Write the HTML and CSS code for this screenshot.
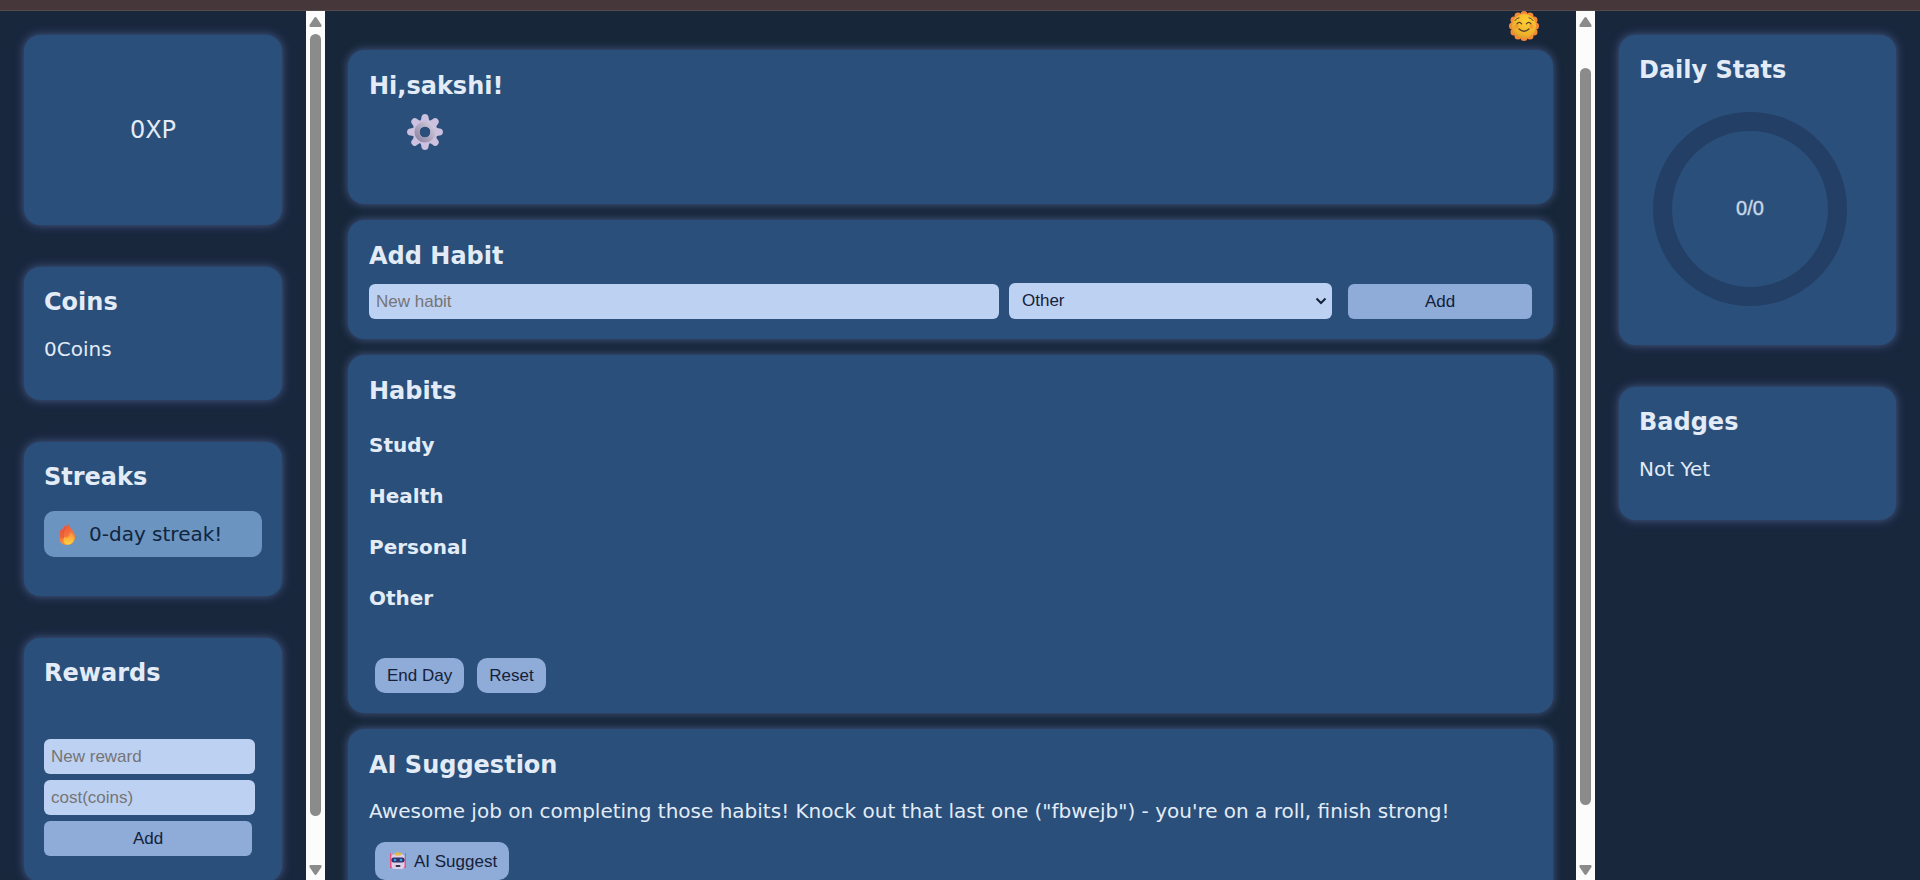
FILE: index.html
```html
<!DOCTYPE html>
<html lang="en">
<head>
<meta charset="utf-8">
<meta name="viewport" content="width=device-width, initial-scale=1">
<title>Habit Tracker</title>
<link rel="stylesheet" href="styles.css">
</head>
<body>
<div class="topbar"></div>
<div class="app">
  <aside class="side side-left">
    <section class="card card-xp">0XP</section>
    <section class="card card-short">
      <h2>Coins</h2>
      <p>0Coins</p>
    </section>
    <section class="card card-short">
      <h2>Streaks</h2>
      <div class="streak">
        <svg class="flame" viewBox="0 0 16 21" aria-hidden="true">
          <defs><linearGradient id="fl" x1="0" y1="0" x2="0.4" y2="1"><stop offset="0" stop-color="#e8503f"/><stop offset="0.6" stop-color="#f5703c"/><stop offset="1" stop-color="#fb9a3c"/></linearGradient>
          <linearGradient id="fi" x1="0" y1="0" x2="0" y2="1"><stop offset="0" stop-color="#fb8b3c"/><stop offset="1" stop-color="#ffd23f"/></linearGradient></defs>
          <path fill="url(#fl)" d="M9.200 0C9.800 3 13 4.500 14.500 8C15.500 10 16 11.500 16 13.500C16 18 12.500 21 8 21S0 18 0 13.500C0 9.500 1 6.500 3 4.200L3.300 5.600C3.800 4 4.800 2.600 6 1.600L6.400 3.200C7.200 2 8.200 1 9.200 0z"/>
          <path fill="none" stroke="#d9523f" stroke-width=".8" d="M3.300 5.600C2 8 1.500 11 2.500 14M6.400 3.200C4.500 6 3.500 10 4.500 14"/>
          <path fill="url(#fi)" d="M11.500 7.500C12.500 10 14.700 11.500 14.700 14.800C14.700 18.300 12.200 20.500 9 20.500S4.500 18.300 4.500 16C4.500 14.500 5.300 13.400 6.300 12.800C7.100 13.800 7.900 13.800 8.800 13C10.300 11.600 11.500 9.500 11.500 7.500z"/>
        </svg>
        <span>0-day streak!</span>
      </div>
    </section>
    <section class="card">
      <h2>Rewards</h2>
      <form class="reward-form">
        <input class="field" type="text" placeholder="New reward" aria-label="New reward">
        <input class="field" type="text" placeholder="cost(coins)" aria-label="Cost in coins">
        <button class="btn btn-add" type="button">Add</button>
      </form>
    </section>
  </aside>
  <div class="scroll scroll-left" aria-hidden="true">
    <svg class="arrow" viewBox="0 0 13 10"><path d="M6.500 0Q7.200 0 7.800 1L12.500 8Q13 10 11.500 10H1.500Q0 10 .5 8L5.200 1Q5.800 0 6.500 0z"/></svg>
    <div class="thumb"></div>
    <svg class="arrow arrow-down" viewBox="0 0 13 10"><path d="M6.500 0Q7.200 0 7.800 1L12.500 8Q13 10 11.500 10H1.500Q0 10 .5 8L5.200 1Q5.800 0 6.500 0z"/></svg>
  </div>
  <main class="main">
    <div class="theme-row">
      <button class="icon-btn" type="button" aria-label="Toggle theme">
        <svg class="sun" viewBox="0 0 30 30">
          <defs><radialGradient id="sg" cx=".6" cy=".3" r=".8"><stop offset="0" stop-color="#ffcf35"/><stop offset=".7" stop-color="#edb32b"/><stop offset="1" stop-color="#d9952b"/></radialGradient></defs>
          <g fill="#f58a36"><circle cx="15" cy="3.500" r="3.500"/><circle cx="15" cy="26.500" r="3.500"/><circle cx="3.500" cy="15" r="3.500"/><circle cx="26.500" cy="15" r="3.500"/><circle cx="9" cy="5" r="3.500"/><circle cx="21" cy="5" r="3.500"/><circle cx="9" cy="25" r="3.500"/><circle cx="21" cy="25" r="3.500"/><circle cx="5" cy="9" r="3.500"/><circle cx="5" cy="21" r="3.500"/><circle cx="25" cy="9" r="3.500"/><circle cx="25" cy="21" r="3.500"/></g>
          <circle cx="15" cy="15" r="12" fill="url(#sg)"/>
          <circle cx="7.500" cy="15.500" r="2" fill="#f58a36" opacity=".7"/><circle cx="22.500" cy="15.500" r="2" fill="#f58a36" opacity=".7"/>
          <g fill="none" stroke="#55402f" stroke-width="1.300" stroke-linecap="round"><path d="M8 12.800q2.300-3 4.600 0M17.400 12.800q2.300-3 4.600 0M10 18q5 4.500 10 0"/><path stroke-width="1" d="M6 9.500q1.500-2.500 4-2.800M24 9.500q-1.500-2.500-4-2.800"/></g>
        </svg>
      </button>
    </div>
    <section class="card card-hello">
      <h2>Hi,sakshi!</h2>
      <button class="icon-btn settings" type="button" aria-label="Settings">
        <svg class="gear" viewBox="-18 -18 36 36">
          <defs><linearGradient id="gg" x1="1" y1="0" x2="0" y2="1"><stop offset="0" stop-color="#dcd5e8"/><stop offset="1" stop-color="#bda8d6"/></linearGradient>
          <linearGradient id="gr" x1="1" y1="0" x2="0" y2="1"><stop offset="0" stop-color="#d2cbdc"/><stop offset="1" stop-color="#8f86a3"/></linearGradient></defs>
          <circle r="9" stroke="url(#gg)" fill="none" stroke-width="7"/>
          <g fill="#cdc1e0"><path id="t" d="M-4.500-10C-4-13-3.500-14-3.300-16Q-2.500-18 0-18T3.300-16C3.500-14 4-13 4.500-10z"/><use href="#t" transform="rotate(45)"/><use href="#t" transform="rotate(90)"/><use href="#t" transform="rotate(135)"/><use href="#t" transform="rotate(180)"/><use href="#t" transform="rotate(225)"/><use href="#t" transform="rotate(270)"/><use href="#t" transform="rotate(315)"/></g>
          <circle r="8" fill="none" stroke="url(#gr)" stroke-width="5"/>
        </svg>
      </button>
    </section>
    <section class="card">
      <h2>Add Habit</h2>
      <form class="habit-form">
        <input class="field" type="text" placeholder="New habit" aria-label="New habit">
        <span class="select-wrap">
          <select class="field" aria-label="Category"><option>Study</option><option>Health</option><option>Personal</option><option selected>Other</option></select>
          <svg class="chevron" viewBox="0 0 12 8" aria-hidden="true"><path d="M1.500 1.500L6 6L10.500 1.500"/></svg>
        </span>
        <button class="btn btn-add" type="button">Add</button>
      </form>
    </section>
    <section class="card">
      <h2>Habits</h2>
      <div class="categories">
        <h3>Study</h3>
        <h3>Health</h3>
        <h3>Personal</h3>
        <h3>Other</h3>
      </div>
      <div class="actions day-actions">
        <button class="btn" type="button">End Day</button>
        <button class="btn" type="button">Reset</button>
      </div>
    </section>
    <section class="card">
      <h2>AI Suggestion</h2>
      <p class="suggestion">Awesome job on completing those habits! Knock out that last one ("fbwejb") - you're on a roll, finish strong!</p>
      <div class="actions">
        <button class="btn btn-ai" type="button">
          <svg class="robot" viewBox="0 0 18 18" aria-hidden="true">
            <path fill="#ef4f7b" d="M1 1h1v5h1v10H1zM16 1h1v15h-2V6h1z"/>
            <rect x="2.500" y="2" width="13" height="15" rx="3.500" fill="#ddd0ea"/>
            <rect x="5.500" y="0.500" width="7" height="3" rx="1.500" fill="#eab64a"/>
            <rect x="2.500" y="5.500" width="13" height="5" rx="2" fill="#33336b"/>
            <circle cx="6" cy="8" r="1.300" fill="#2fa8e8"/><circle cx="12" cy="8" r="1.300" fill="#2fa8e8"/>
            <rect x="6.500" y="13" width="5" height="2" rx="1" fill="#393450"/>
          </svg>
          <span>AI Suggest</span>
        </button>
      </div>
    </section>
  </main>
  <div class="scroll scroll-main" aria-hidden="true">
    <svg class="arrow" viewBox="0 0 13 10"><path d="M6.500 0Q7.200 0 7.800 1L12.500 8Q13 10 11.500 10H1.500Q0 10 .5 8L5.200 1Q5.800 0 6.500 0z"/></svg>
    <div class="thumb"></div>
    <svg class="arrow arrow-down" viewBox="0 0 13 10"><path d="M6.500 0Q7.200 0 7.800 1L12.500 8Q13 10 11.500 10H1.500Q0 10 .5 8L5.200 1Q5.800 0 6.500 0z"/></svg>
  </div>
  <aside class="side side-right">
    <section class="card card-short">
      <h2>Daily Stats</h2>
      <svg class="ring" viewBox="0 0 194 194" role="img" aria-label="0 of 0 habits done">
        <circle class="ring-track" cx="97" cy="97" r="87.500"/>
        <text class="ring-text" x="97" y="103" text-anchor="middle">0/0</text>
      </svg>
    </section>
    <section class="card card-short">
      <h2>Badges</h2>
      <p>Not Yet</p>
    </section>
  </aside>
</div>
</body>
</html>
```
FILE: styles.css
```css
* { box-sizing: border-box; }

body {
  margin: 0;
  height: 100vh;
  display: flex;
  flex-direction: column;
  overflow: hidden;
  background: #19273d;
  color: #e3ebf7;
  font: 20px/24px "DejaVu Sans", Verdana, sans-serif;
}

h2, h3, p { margin: 0; }
h2 { font-size: 24px; line-height: 30px; }
h3 { font-size: 20px; line-height: 24px; }

.topbar {
  flex: none;
  height: 11px;
  background: #46373b;
  border-bottom: 1px solid #564a4a;
}

.app {
  flex: 1;
  min-height: 0;
  display: flex;
}

.side {
  flex: none;
  display: flex;
  flex-direction: column;
  gap: 42px;
  padding: 24px;
  overflow: hidden;
}
.side-left { width: 306px; }
.side-right { width: 325px; }

.card {
  flex: none;
  padding: 20px;
  border-radius: 16px;
  background: #294f7a;
  box-shadow: 0 0 10px #485d8e;
}
.card-short { padding-bottom: 39px; }
.card-short p { margin-top: 20px; }
.card-xp {
  height: 190px;
  display: flex;
  align-items: center;
  justify-content: center;
  font-size: 24px;
}

.streak {
  display: flex;
  align-items: center;
  gap: 14px;
  margin-top: 19px;
  padding: 11px 15px;
  border-radius: 10px;
  background: #6b94c0;
  color: #10253f;
}
.flame { width: 16px; height: 21px; }

.field, .btn {
  height: 35px;
  border: 0;
  font: 17px/20px "Liberation Sans", Arial, sans-serif;
  color: #14213a;
}
.field {
  min-width: 0;
  padding: 0 7px;
  border-radius: 6px;
  background: #bdd1f3;
}
.field::placeholder { color: #757575; opacity: 1; }
.btn {
  padding: 0 12px;
  border-radius: 10px;
  background: #8fabd7;
}
.btn-add { border-radius: 6px; }

.reward-form {
  display: flex;
  flex-direction: column;
  gap: 6px;
  margin-top: 51px;
  padding: 0 7px 6px 0;
}
.reward-form .btn { margin-right: 3px; }

.scroll {
  flex: none;
  width: 19px;
  display: flex;
  flex-direction: column;
  align-items: center;
  padding: 6px 0 5px;
  background: #fcfcfc;
}
.arrow { flex: none; width: 13px; height: 10px; fill: #8b8b8b; }
.arrow-down { transform: rotate(180deg); }
.thumb {
  flex: 1;
  width: 11px;
  border-radius: 6px;
  background: #8b8b8b;
}
.scroll-left .thumb { margin: 7px 0 49px; }
.scroll-main .thumb { margin: 41px 0 60px; }

.main {
  flex: 1;
  min-width: 0;
  display: flex;
  flex-direction: column;
  gap: 16px;
  padding: 0 23px;
  overflow: hidden;
  background: #172638;
}
.main .card { padding: 21px; padding-bottom: 20px; }

.theme-row {
  flex: none;
  display: flex;
  justify-content: flex-end;
  height: 23px;
  padding-right: 14px;
}
.icon-btn { height: max-content; padding: 0; border: 0; background: none; }
.icon-btn svg { display: block; }
.sun { width: 30px; height: 30px; }
.settings { display: block; margin: 13px 0 34px 38px; }
.gear { width: 36px; height: 36px; }

.habit-form {
  display: grid;
  grid-template-columns: minmax(0, 630fr) minmax(0, 349fr) minmax(0, 184fr);
  align-items: end;
  margin-top: 12px;
}
.select-wrap {
  position: relative;
  display: flex;
  margin: 0 16px 0 10px;
}
.select-wrap .field {
  appearance: none;
  width: 100%;
  height: 36px;
  padding: 0 13px;
}
.chevron {
  position: absolute;
  right: 5px;
  top: 14px;
  width: 12px;
  height: 8px;
  fill: none;
  stroke: #14213a;
  stroke-width: 2;
  pointer-events: none;
}

.categories {
  display: flex;
  flex-direction: column;
  gap: 27px;
  margin-top: 27px;
}
.actions { display: flex; gap: 13px; margin: 19px 0 0 6px; }
.day-actions { margin-top: 48px; }
.suggestion { margin-top: 19px; }
.btn-ai {
  display: flex;
  align-items: center;
  gap: 5px;
  height: 38px;
}
.btn-ai span { padding-top: 2px; }
.robot { width: 22px; height: 18px; }

.ring {
  display: block;
  width: 194px;
  height: 194px;
  margin: 27px 0 0 14px;
}
.ring-track { fill: none; stroke: #243f65; stroke-width: 19; }
.ring-text {
  fill: #cbd8e8;
  stroke: #cbd8e8;
  stroke-opacity: 0.4;
  font: 20px "Liberation Sans", Arial, sans-serif;
}
```
